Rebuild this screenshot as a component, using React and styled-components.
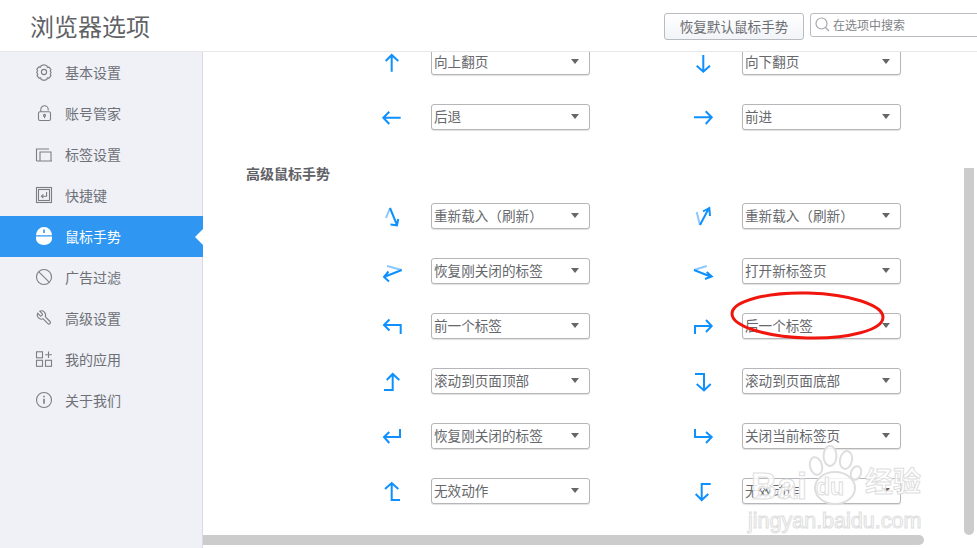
import React from "react";
import styled, { createGlobalStyle } from "styled-components";

const GlobalStyle = createGlobalStyle`
  html, body {
    margin: 0;
    padding: 0;
    background: #fff;
  }
  * {
    box-sizing: border-box;
  }
`;

const CJK = `"Noto Sans CJK SC", "Liberation Sans", sans-serif`;

const Page = styled.div`
  position: relative;
  width: 977px;
  height: 548px;
  overflow: hidden;
  display: flex;
  flex-direction: column;
  font-family: ${CJK};
  color: #666;
`;

const Header = styled.header`
  flex: 0 0 52px;
  display: flex;
  align-items: flex-start;
  padding-left: 30px;
  background: #fff;
  border-bottom: 1px solid #e8e8ea;
  overflow: hidden;
  position: relative;
  z-index: 2;
`;

const Title = styled.h1`
  margin: 8px 0 0;
  font-size: 24px;
  line-height: 36px;
  font-weight: 400;
  color: #606266;
`;

const ResetButton = styled.button`
  margin: 13px 0 0 auto;
  width: 140px;
  height: 27px;
  padding: 0 0 2px;
  border: 1px solid #b9bbc0;
  border-radius: 3px;
  background: linear-gradient(#fff, #f1f4f8);
  font-family: ${CJK};
  font-size: 13.6px;
  color: #6b6d72;
`;

const SearchBox = styled.div`
  margin: 13px -30px 0 6px;
  flex: 0 0 197px;
  height: 24px;
  display: flex;
  align-items: center;
  gap: 3px;
  padding: 0 0 2px 4px;
  border: 1px solid #b9bbc0;
  border-radius: 3px;
  font-size: 12px;
  color: #808287;
`;

const Body = styled.div`
  flex: 1;
  min-height: 0;
  display: flex;
`;

const Sidebar = styled.nav`
  flex: 0 0 203px;
  background: #eff1f6;
  border-right: 1px solid #d9dbe1;
`;

const NavItem = styled.div`
  position: relative;
  height: 41px;
  margin-right: ${(props) => (props.$active ? "-1px" : "0")};
  display: flex;
  align-items: center;
  gap: 13px;
  padding: 0 0 2px 36px;
  font-size: 14px;
  color: ${(props) => (props.$active ? "#fff" : "#6e7076")};
  background: ${(props) => (props.$active ? "#2f97f1" : "transparent")};

  &::after {
    content: "";
    display: ${(props) => (props.$active ? "block" : "none")};
    position: absolute;
    right: 0;
    top: 13px;
    border-style: solid;
    border-width: 8px 8px 8px 0;
    border-color: transparent #fff transparent transparent;
  }
`;

const NavIcon = styled.svg`
  flex: 0 0 16px;
  width: 16px;
  height: 16px;
  overflow: visible;
  fill: none;
  stroke: currentColor;
  stroke-width: 1.1;
  color: ${(props) => (props.$active ? "#fff" : "#7c7e84")};
`;

const Main = styled.main`
  flex: 1;
  min-width: 0;
  overflow: hidden;
  padding: 0 0 0 43px;
`;

const ActionGrid = styled.div`
  margin-left: 133px;
  margin-top: ${(props) => props.$top || 0}px;
  display: grid;
  grid-template-columns: 311px 311px;
  row-gap: 29px;
`;

const SectionTitle = styled.h2`
  margin: 33px 0 20px;
  font-size: 14px;
  line-height: 20px;
  font-weight: 700;
  color: #5f6166;
`;

const ActionRow = styled.div`
  display: flex;
  align-items: center;
  gap: 26px;
`;

const ArrowIcon = styled.svg`
  flex: 0 0 26px;
  width: 26px;
  height: 26px;
  fill: none;
  stroke: #0f90ff;
  stroke-width: 2;
`;

const Select = styled.div`
  position: relative;
  width: 159px;
  height: 26px;
  padding-left: 2px;
  border: 1px solid #b5b5ba;
  border-radius: 3px;
  box-shadow: 0 1px 1px rgba(0, 0, 0, 0.12);
  background: #fff;
  font-size: 13.6px;
  line-height: 23px;
  color: #66686c;
  white-space: nowrap;

  &::after {
    content: "";
    position: absolute;
    right: 10px;
    top: 9px;
    border-style: solid;
    border-width: 5px 4.5px 0;
    border-color: #66666a transparent transparent;
  }
`;

const VerticalThumb = styled.div`
  position: absolute;
  left: 964px;
  top: 168px;
  width: 10px;
  height: 367px;
  border-radius: 0 0 5px 5px;
  background: #ccc;
`;

const HorizontalThumb = styled.div`
  position: absolute;
  left: 203px;
  top: 535px;
  width: 721px;
  height: 10px;
  border-radius: 0 5px 5px 0;
  background: #ccc;
`;

const Annotation = styled.svg`
  position: absolute;
  left: 725px;
  top: 285px;
  width: 165px;
  height: 62px;
  fill: none;
  stroke: #f0160e;
  stroke-width: 3;
`;

const Watermark = styled.div`
  position: absolute;
  left: 748px;
  top: 446px;
  width: 180px;
  height: 84px;
  color: rgba(255, 255, 255, 0.82);
  -webkit-text-stroke: 1px #dedede;
  font-family: "Liberation Sans", sans-serif;
`;

const WatermarkLogo = styled.div`
  position: relative;
  display: flex;
  align-items: flex-end;
  height: 52px;
`;

const WatermarkBrand = styled.span`
  width: 56px;
  padding-left: 3px;
  margin-bottom: -7px;
  font-size: 36px;
  line-height: 36px;
  font-weight: 700;
`;

const Paw = styled.svg`
  flex: 0 0 60px;
  width: 60px;
  height: 62px;
  margin-bottom: -8px;
  fill: rgba(255, 255, 255, 0.82);
  stroke: #dedede;
  stroke-width: 2;
`;

const PawLabel = styled.span`
  position: absolute;
  left: 68px;
  top: 28px;
  font-size: 23px;
  line-height: 26px;
  font-weight: 700;
`;

const WatermarkJingyan = styled.span`
  margin-left: 1px;
  font-family: ${CJK};
  font-size: 28px;
  line-height: 36px;
  font-weight: 700;
`;

const WatermarkUrl = styled.div`
  margin-top: 11px;
  font-size: 21.500px;
  line-height: 24px;
  white-space: nowrap;
`;

const navIcons = {
  gear: (
    <>
      <path d="M5.200 1.600 8 .8l2.800.8.5 1.700 1.700-.2 2 2.400-.8 1.500.9 1.600-.9 1.600.8 1.500-2 2.400-1.700-.2-.5 1.700-2.800.8-2.800-.8-.5-1.700-1.700.2-2-2.400.8-1.500L.7 8.400l.9-1.600-.8-1.500 2-2.400 1.700.2z" />
      <circle cx="8" cy="8" r="2.600" />
    </>
  ),
  lock: (
    <>
      <rect x="2.500" y="6.800" width="12" height="8.700" rx="1.500" />
      <path d="M4.800 6.800V4.400a3.700 3.700 0 0 1 7.400 0v1" />
      <circle cx="8.500" cy="10.400" r="1" />
      <path d="M8.500 11.400v1.800" />
    </>
  ),
  tabs: (
    <>
      <path d="M.5 15V3H13" />
      <path d="M4 15V6h11v9M.5 15H16" />
    </>
  ),
  keys: (
    <>
      <rect x=".5" y=".5" width="15" height="15" />
      <rect x="2.500" y="2.500" width="11" height="11" />
      <path d="M10.600 5v4.300H5.600M7.400 7.400 5.400 9.300l2 1.900" />
    </>
  ),
  mouse: (
    <>
      <path d="M0 7.200A8 8.200 0 0 1 16 7.200z" fill="currentColor" stroke="none" />
      <path d="M0 8.400h16V11a8 6 0 0 1-16 0z" fill="currentColor" stroke="none" />
      <path d="M8 1.500v3.500" stroke="#2f97f1" strokeWidth="1.600" />
    </>
  ),
  ban: (
    <>
      <circle cx="8" cy="8" r="7.500" />
      <path d="m2.800 2.800 10.400 10.400" />
    </>
  ),
  wrench: (
    <path
      transform="translate(16.500 -.5) scale(-.69 .69)"
      strokeWidth="1.600"
      d="M14.700 6.300a1 1 0 0 0 0 1.400l1.600 1.600a1 1 0 0 0 1.400 0l3.770-3.770a6 6 0 0 1-7.940 7.940l-6.910 6.910a2.120 2.120 0 0 1-3-3l6.910-6.910a6 6 0 0 1 7.940-7.940l-3.760 3.760z"
    />
  ),
  apps: (
    <>
      <rect x=".5" y=".8" width="6" height="6" />
      <rect x=".5" y="9.300" width="6" height="6" />
      <rect x="9.500" y="9.300" width="6" height="6" />
      <path d="M12.500.5v6.500M9.200 3.800h6.600" />
    </>
  ),
  info: (
    <>
      <circle cx="8" cy="8" r="7.500" />
      <path d="M8 6.800v5" strokeWidth="1.600" />
      <path d="M8 3.800v1.500" strokeWidth="1.600" />
    </>
  ),
};

const navItems = [
  { label: "基本设置", icon: "gear" },
  { label: "账号管家", icon: "lock" },
  { label: "标签设置", icon: "tabs" },
  { label: "快捷键", icon: "keys" },
  { label: "鼠标手势", icon: "mouse", active: true },
  { label: "广告过滤", icon: "ban" },
  { label: "高级设置", icon: "wrench" },
  { label: "我的应用", icon: "apps" },
  { label: "关于我们", icon: "info" },
];

// each row: left gesture, right gesture. `d` main stroke, `fade` the paler first stroke
const basicActions = [
  { label: "向上翻页", d: "M12.700 6v16.700M6.700 12l6-6 6.600 6" },
  { label: "向下翻页", d: "M13.300 6v16.700M6.700 16.700l6.600 6 6.700-6" },
  { label: "后退", d: "M4.300 13.700h17.400M10.300 7.700l-6 6 6 6.300" },
  { label: "前进", d: "M4 13.300h17.700M15.700 7.300l6 6-6 6.700" },
];

const advancedActions = [
  { label: "重新载入（刷新）", fade: "M7 15l4-10", d: "M11 5l7 17M11.500 21.500l6.500.8 1.200-6.300" },
  { label: "重新载入（刷新）", fade: "M6.700 9 10 22", d: "M10 22l9-17M13 8.500 19.300 5l.7 8" },
  { label: "恢复刚关闭的标签", fade: "M22.700 12 8 8", d: "M22.700 12 5 19M9.500 13.500 5 19l5 4.500" },
  { label: "打开新标签页", fade: "M4 12l12.700-4", d: "M4 12l17.700 7M16.700 14l5 4.500-6.700 2.500" },
  { label: "前一个标签", d: "M21.700 21v-9H5M10.500 6.500 5 12l5.500 5.500" },
  { label: "后一个标签", d: "M5 21v-8h16.700M16 7l5.700 6L16 19" },
  { label: "滚动到页面顶部", d: "M5 22h8.700V6M7.700 12l6-6 6.600 6" },
  { label: "滚动到页面底部", d: "M5 6h9v16.500M6.700 16l7.300 6.500 6.700-6.500" },
  { label: "恢复刚关闭的标签", d: "M21 6v8H5M10.300 9 5 14l5.300 6" },
  { label: "关闭当前标签页", d: "M5 6v8h16.700M16 9l5.700 5L16 20" },
  { label: "无效动作", d: "M21 22h-8.300V5M6 11l6.700-6 6.600 6" },
  { label: "无效动作", d: "M20.700 6h-9v16M5.700 16l6 6 6.600-6" },
];

function Action({ label, d, fade }) {
  return (
    <ActionRow>
      <ArrowIcon viewBox="0 0 26 26">
        {fade && <path d={fade} stroke="#8cc8ff" />}
        <path d={d} />
      </ArrowIcon>
      <Select>{label}</Select>
    </ActionRow>
  );
}

export default function App() {
  return (
    <Page>
      <GlobalStyle />
      <Header>
        <Title>浏览器选项</Title>
        <ResetButton>恢复默认鼠标手势</ResetButton>
        <SearchBox>
          <svg width="15" height="15" viewBox="0 0 15 15" fill="none" stroke="#a5a7ab" strokeWidth="1.200">
            <circle cx="6.500" cy="6.500" r="5.500" />
            <path d="m10.500 10.500 3.500 3.500" />
          </svg>
          在选项中搜索
        </SearchBox>
      </Header>
      <Body>
        <Sidebar>
          {navItems.map((item) => (
            <NavItem key={item.label} $active={item.active}>
              <NavIcon viewBox="0 0 16 16" $active={item.active}>
                {navIcons[item.icon]}
              </NavIcon>
              {item.label}
            </NavItem>
          ))}
        </Sidebar>
        <Main>
          <ActionGrid $top={-3}>
            {basicActions.map((a, i) => (
              <Action key={i} {...a} />
            ))}
          </ActionGrid>
          <SectionTitle>高级鼠标手势</SectionTitle>
          <ActionGrid>
            {advancedActions.map((a, i) => (
              <Action key={i} {...a} />
            ))}
          </ActionGrid>
        </Main>
      </Body>
      <VerticalThumb />
      <HorizontalThumb />
      <Annotation viewBox="0 0 165 62">
        <ellipse cx="82.500" cy="30.500" rx="75.500" ry="22.500" transform="rotate(1.500 82.500 30.500)" />
      </Annotation>
      <Watermark>
        <WatermarkLogo>
          <WatermarkBrand>Bai</WatermarkBrand>
          <Paw viewBox="0 0 60 62">
            <ellipse cx="12" cy="22" rx="6" ry="9" transform="rotate(-15 12 22)" />
            <ellipse cx="26" cy="12" rx="6.500" ry="10" />
            <ellipse cx="42" cy="16" rx="6" ry="9" transform="rotate(12 42 16)" />
            <ellipse cx="52" cy="29" rx="5" ry="7" transform="rotate(20 52 29)" />
            <ellipse cx="31" cy="44" rx="20" ry="16" />
          </Paw>
          <PawLabel>du</PawLabel>
          <WatermarkJingyan>经验</WatermarkJingyan>
        </WatermarkLogo>
        <WatermarkUrl>jingyan.baidu.com</WatermarkUrl>
      </Watermark>
    </Page>
  );
}
